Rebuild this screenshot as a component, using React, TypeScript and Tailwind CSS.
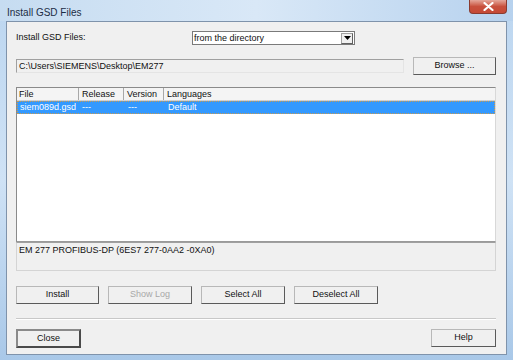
const btn =
  "h-[18px] flex items-center justify-center text-[9px] bg-[#f0f0f0] border border-[#b8b8b8] border-r-[#5a5a5a] border-b-[#5a5a5a]";

const App = () => {
  return (
    <div
      className="w-[513px] h-[360px] flex flex-col bg-gradient-to-b from-[#bcd6f0] via-[#cfe2f5] to-[#a9c8e8] overflow-hidden"
      style={{ fontFamily: '"Liberation Sans", Arial, sans-serif' }}
    >
      {/* Title bar */}
      <div className="h-[21px] flex items-start justify-between pl-[7px] pr-[6px] bg-gradient-to-r from-[#c6dcf1] via-[#d9e8f7] to-[#b7d2ee]">
        <span className="text-[10px] text-[#1b2d45] mt-[5px]">Install GSD Files</span>
        <div className="w-[38px] h-[14px] rounded-b-[4px] bg-gradient-to-b from-[#e4a79b] via-[#c8503d] to-[#c54a36] border border-[#8a3b30] border-t-0 flex items-center justify-center">
          <svg width="11" height="9" viewBox="0 0 11 9">
            <path d="M1.5 1 L9.5 8 M9.5 1 L1.5 8" stroke="#ffffff" strokeWidth="2.2" strokeLinecap="round" />
          </svg>
        </div>
      </div>

      {/* Client area */}
      <div className="flex-1 mx-[6px] mb-[5px] bg-[#f0f0f0] border border-[#7f93ab] flex flex-col pl-[9px] pr-[10px] text-[9px] text-[#111]">
        {/* Source row */}
        <div className="flex items-center mt-[9px] h-[14px]">
          <span className="w-[176px]">Install GSD Files:</span>
          <div className="w-[163px] h-[14px] bg-white border border-[#7a7a7a] flex items-center justify-between">
            <span className="pl-[1px] leading-none">from the directory</span>
            <div className="w-[12px] h-[11px] mr-[1px] bg-[#f0f0f0] border border-[#a0a0a0] border-r-[#606060] border-b-[#606060] flex items-center justify-center">
              <svg width="7" height="4" viewBox="0 0 7 4">
                <path d="M0 0 H7 L3.5 4 Z" fill="#000" />
              </svg>
            </div>
          </div>
        </div>

        {/* Path row */}
        <div className="flex items-center justify-between mt-[12px] h-[18px]">
          <div className="w-[388px] h-[14px] border border-[#a0a0a0] border-r-[#e4e4e4] border-b-[#e4e4e4] bg-[#f0f0f0] flex items-center pl-[2px] leading-none">
            C:\Users\SIEMENS\Desktop\EM277
          </div>
          <div className={`${btn} w-[83px]`}>Browse ...</div>
        </div>

        {/* File list */}
        <div className="mt-[12px] h-[155px] bg-white border border-[#8a8a8a] border-r-[#d8d8d8] border-b-[#9a9a9a] flex flex-col">
          <div className="h-[13px] flex bg-[#f4f4f4] border-b border-[#d0d0d0] leading-none">
            <div className="w-[62px] pl-[2px] border-r border-[#a8a8a8] flex items-center">File</div>
            <div className="w-[45px] pl-[3px] border-r border-[#a8a8a8] flex items-center">Release</div>
            <div className="w-[40px] pl-[3px] border-r border-[#a8a8a8] flex items-center">Version</div>
            <div className="flex-1 pl-[3px] flex items-center">Languages</div>
          </div>
          <div className="h-[13px] flex bg-[#3399ff] text-white border border-dotted border-[#c89a50] leading-none">
            <div className="w-[61px] pl-[2px] flex items-center">siem089d.gsd</div>
            <div className="w-[45px] pl-[3px] flex items-center">---</div>
            <div className="w-[40px] pl-[4px] flex items-center">---</div>
            <div className="flex-1 pl-[4px] flex items-center">Default</div>
          </div>
        </div>

        {/* Description */}
        <div className="h-[29px] border border-[#d4d4d4] border-t-[#a0a0a0] bg-[#f0f0f0] pl-[2px] pt-[3px] leading-none">
          EM 277 PROFIBUS-DP (6ES7 277-0AA2 -0XA0)
        </div>

        {/* Action buttons */}
        <div className="flex gap-[9px] mt-[15px]">
          <div className={`${btn} w-[83px]`}>Install</div>
          <div className={`${btn} w-[84px] text-[#a8a8a8]`}>Show Log</div>
          <div className={`${btn} w-[84px]`}>Select All</div>
          <div className={`${btn} w-[84px]`}>Deselect All</div>
        </div>

        {/* Separator */}
        <div className="mt-[14px] border-t border-[#c8c8c8] border-b border-b-white" />

        {/* Bottom buttons */}
        <div className="flex justify-between mt-[9px]">
          <div className="h-[19px] w-[65px] flex items-center justify-center bg-[#f0f0f0] border-2 border-[#8a8a8a] border-r-[#4a4a4a] border-b-[#4a4a4a]">
            Close
          </div>
          <div className={`${btn} w-[65px]`}>Help</div>
        </div>
      </div>
    </div>
  );
};

export default App;
